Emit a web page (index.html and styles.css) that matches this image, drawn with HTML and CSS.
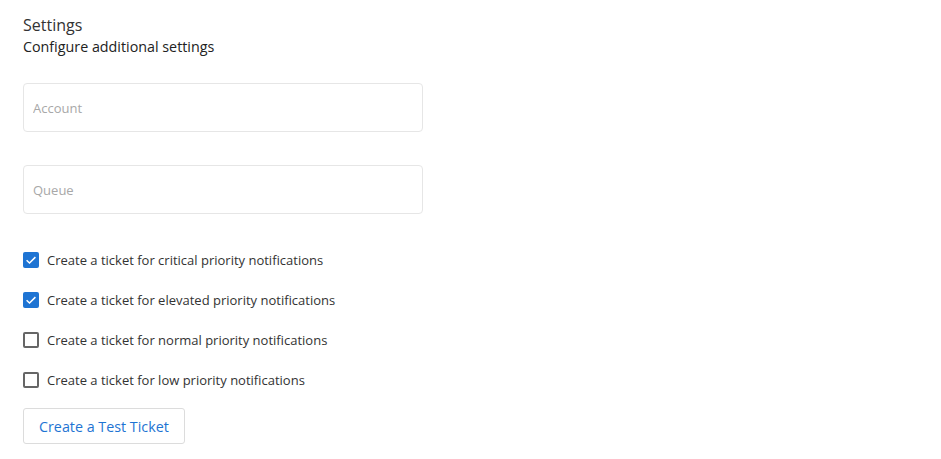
FILE: index.html
```html
<!DOCTYPE html>
<html lang="en">
<head>
    <meta charset="UTF-8">
    <title>Settings</title>
    <link rel="stylesheet" href="styles.css">
</head>
<body>

<div class="settings">
    <div class="header">
        <div class="title">Settings</div>
        <div class="subtitle">Configure additional settings</div>
    </div>

    <div class="field"><input type="text" placeholder="Account"></div>
    <div class="field"><input type="text" placeholder="Queue"></div>

    <div class="options">
        <label class="option">
            <span class="box checked">
                <svg viewBox="0 0 16 16" width="16" height="16"><path d="M3.6 8.2l2.9 2.8 5.9-5.9" fill="none" stroke="#fff" stroke-width="1.5"/></svg>
            </span>
            Create a ticket for critical priority notifications
        </label>
        <label class="option">
            <span class="box checked">
                <svg viewBox="0 0 16 16" width="16" height="16"><path d="M3.6 8.2l2.9 2.8 5.9-5.9" fill="none" stroke="#fff" stroke-width="1.5"/></svg>
            </span>
            Create a ticket for elevated priority notifications
        </label>
        <label class="option">
            <span class="box"></span>
            Create a ticket for normal priority notifications
        </label>
        <label class="option">
            <span class="box"></span>
            Create a ticket for low priority notifications
        </label>
    </div>

    <button class="test-btn">Create a Test Ticket</button>
</div>

</body>
</html>
```

FILE: styles.css
```css
body {
    font-family: 'Open Sans', sans-serif;
    color: #333;
    background: #fff;
    margin: 0;
    padding: 14px 23px;
}

.settings {
    width: 400px;
}

.title {
    font-size: 16px;
    line-height: 22px;
    color: #333;
}

.subtitle {
    margin-top: 1px;
    font-size: 14.3px;
    line-height: 20px;
    color: #222;
}

.field {
    margin-top: 33px;
}

.header + .field {
    margin-top: 26px;
}

.field input {
    box-sizing: border-box;
    width: 400px;
    height: 49px;
    border: 1px solid #e6e6e6;
    border-radius: 4px;
    padding: 0 9px;
    font-family: inherit;
    font-size: 13px;
    color: #333;
    outline: none;
}

.field input::placeholder {
    color: #a8a8a8;
}

.options {
    margin-top: 38px;
    display: flex;
    flex-direction: column;
    gap: 24px;
}

.option {
    display: flex;
    align-items: center;
    gap: 8px;
    font-size: 13px;
    line-height: 16px;
    color: #333;
    height: 16px;
}

.box {
    box-sizing: border-box;
    width: 16px;
    height: 16px;
    border: 2px solid #666;
    border-radius: 2px;
    flex-shrink: 0;
    display: flex;
}

.box.checked {
    background: #1e74d3;
    border: none;
}

.test-btn {
    margin-top: 20px;
    height: 36px;
    padding: 0 15px;
    background: #fff;
    border: 1px solid #dcdcdc;
    border-radius: 3px;
    color: #1e74d3;
    font-family: inherit;
    font-size: 14.3px;
    cursor: pointer;
}
```
